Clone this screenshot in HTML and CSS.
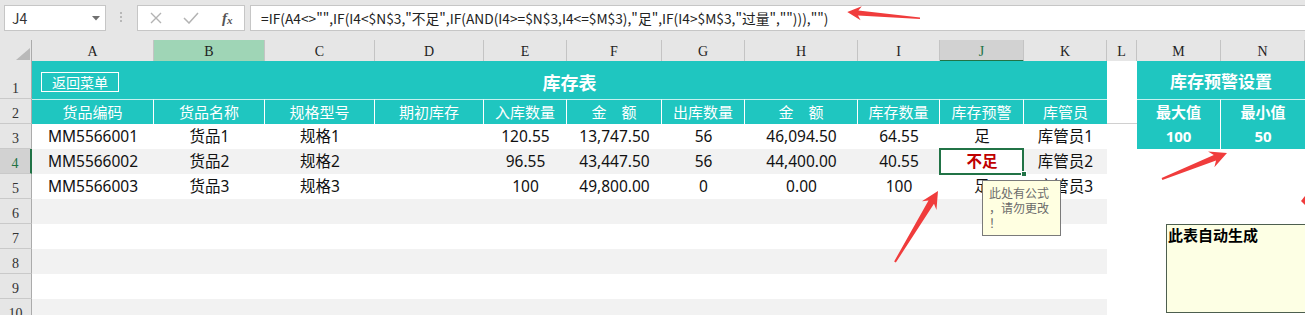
FILE: index.html
```html
<!DOCTYPE html>
<html lang="zh-CN">
<head>
<meta charset="utf-8">
<title>库存表</title>
<link rel="stylesheet" href="styles.css">
</head>
<body>
<div class="app">
  <div class="fbar">
    <div class="namebox">
      <span>J4</span>
      <svg class="nb-arrow" width="8" height="5" viewBox="0 0 8 5"><polygon points="0,0 8,0 4,4.5" fill="#707070"/></svg>
    </div>
    <svg class="grip" width="6" height="14" viewBox="0 0 6 14">
      <circle cx="3" cy="2" r="1" fill="#a8a8a8"/>
      <circle cx="3" cy="6" r="1" fill="#a8a8a8"/>
      <circle cx="3" cy="10" r="1" fill="#a8a8a8"/>
    </svg>
    <div class="fbtns">
      <span class="slot"><svg width="12" height="12" viewBox="0 0 12 12"><path d="M1 1 L11 11 M11 1 L1 11" stroke="#b3b3b3" stroke-width="1.4" fill="none"/></svg></span>
      <span class="slot"><svg width="16" height="12" viewBox="0 0 16 12"><path d="M1 6 L6 11 L15 1" stroke="#b3b3b3" stroke-width="1.5" fill="none"/></svg></span>
      <span class="slot fx"><i>f</i><i class="fx-x">x</i></span>
    </div>
    <div class="formula">=IF(A4&lt;&gt;"",IF(I4&lt;$N$3,"不足",IF(AND(I4&gt;=$N$3,I4&lt;=$M$3),"足",IF(I4&gt;$M$3,"过量",""))),"")</div>
  </div>

  <div class="sheet">
    <div class="row colhead">
      <div class="corner"><svg width="14" height="12" viewBox="0 0 14 12"><polygon points="14,0 14,12 0,12" fill="#b9b9b9"/></svg></div>
      <div class="ch">A</div>
      <div class="ch ch-b">B</div>
      <div class="ch">C</div>
      <div class="ch">D</div>
      <div class="ch">E</div>
      <div class="ch">F</div>
      <div class="ch">G</div>
      <div class="ch">H</div>
      <div class="ch">I</div>
      <div class="ch ch-sel">J</div>
      <div class="ch">K</div>
      <div class="ch">L</div>
      <div class="ch">M</div>
      <div class="ch">N</div>
    </div>

    <div class="row r1">
      <div class="rh">1</div>
      <div class="title-cell">
        <div class="menu-btn">返回菜单</div>
        <div class="title">库存表</div>
        <div></div>
      </div>
      <div class="blank"></div>
      <div class="warn-title">库存预警设置</div>
    </div>

    <div class="row r2">
      <div class="rh">2</div>
      <div class="hd">货品编码</div>
      <div class="hd">货品名称</div>
      <div class="hd">规格型号</div>
      <div class="hd">期初库存</div>
      <div class="hd">入库数量</div>
      <div class="hd">金　额</div>
      <div class="hd">出库数量</div>
      <div class="hd">金　额</div>
      <div class="hd">库存数量</div>
      <div class="hd">库存预警</div>
      <div class="hd hd-last">库管员</div>
      <div class="blank blank-line"></div>
      <div class="wh wh-m">最大值</div>
      <div class="wh">最小值</div>
    </div>

    <div class="row odd">
      <div class="rh">3</div>
      <div class="c">MM5566001</div>
      <div class="c">货品1</div>
      <div class="c">规格1</div>
      <div class="c"></div>
      <div class="c">120.55</div>
      <div class="c">13,747.50</div>
      <div class="c">56</div>
      <div class="c">46,094.50</div>
      <div class="c">64.55</div>
      <div class="c">足</div>
      <div class="c">库管员1</div>
      <div class="blank"></div>
      <div class="wv wv-m">100</div>
      <div class="wv">50</div>
    </div>

    <div class="row even">
      <div class="rh rh-sel">4</div>
      <div class="c">MM5566002</div>
      <div class="c">货品2</div>
      <div class="c">规格2</div>
      <div class="c"></div>
      <div class="c">96.55</div>
      <div class="c">43,447.50</div>
      <div class="c">56</div>
      <div class="c">44,400.00</div>
      <div class="c">40.55</div>
      <div class="c sel">不足<span class="sel-box"></span><span class="handle"></span></div>
      <div class="c">库管员2</div>
    </div>

    <div class="row odd">
      <div class="rh">5</div>
      <div class="c">MM5566003</div>
      <div class="c">货品3</div>
      <div class="c">规格3</div>
      <div class="c"></div>
      <div class="c">100</div>
      <div class="c">49,800.00</div>
      <div class="c">0</div>
      <div class="c">0.00</div>
      <div class="c">100</div>
      <div class="c">足</div>
      <div class="c">库管员3</div>
    </div>

    <div class="row even"><div class="rh">6</div><div class="fill"></div></div>
    <div class="row odd"><div class="rh">7</div><div class="fill"></div></div>
    <div class="row even"><div class="rh">8</div><div class="fill"></div></div>
    <div class="row odd"><div class="rh">9</div><div class="fill"></div></div>
    <div class="row even"><div class="rh">10</div><div class="fill"></div></div>
  </div>

  <div class="tip">此处有公式<br>，请勿更改<br>！</div>

  <div class="note">此表自动生成</div>

  <svg class="arrows" width="1305" height="315" viewBox="0 0 1305 315">
    <g fill="#f03c3c">
      <polygon transform="translate(920 18.3) rotate(184.9)" points="0,-0.7 62,-2.4 59,-7 73,0 59,7 62,2.4 0,0.7"/>
      <polygon transform="translate(895 262) rotate(-58.8)" points="0,-1 70,-3.2 66,-8.5 83,0 66,8.5 70,3.2 0,1"/>
      <polygon transform="translate(1162 179) rotate(-21.8)" points="0,-1 57,-3 53,-8.5 70,0 53,8.5 57,3 0,1"/>
      <polygon points="1301,201 1305,196 1305,205"/>
    </g>
  </svg>
</div>
</body>
</html>
```

FILE: styles.css
```css
* {
  box-sizing: border-box;
}

html,
body {
  margin: 0;
  padding: 0;
}

body {
  width: 1305px;
  height: 315px;
  overflow: hidden;
  background: #ffffff;
  font-family: "Noto Sans CJK SC", "Noto Sans", sans-serif;
}

.app {
  position: relative;
  width: 1305px;
  height: 315px;
  overflow: hidden;
}

/* ---------- formula bar ---------- */
.fbar {
  height: 40px;
  background: #e6e6e6;
  display: flex;
  align-items: flex-start;
  padding: 5px 0 0 4px;
}

.namebox {
  width: 102px;
  height: 26px;
  background: #ffffff;
  border: 1px solid #c6c6c6;
  display: flex;
  align-items: center;
  justify-content: space-between;
  padding: 0 5px 0 7px;
  font-size: 14px;
  line-height: 24px;
  color: #333333;
}

.nb-arrow {
  display: block;
}

.grip {
  display: block;
  margin: 6px 0 0 12px;
}

.fbtns {
  margin-left: 13px;
  width: 108px;
  height: 26px;
  background: #ffffff;
  border: 1px solid #c6c6c6;
  display: flex;
}

.slot {
  width: 36px;
  height: 24px;
  display: flex;
  align-items: center;
  justify-content: center;
}

.slot svg {
  display: block;
}

.fx {
  font-family: "Liberation Serif", "DejaVu Serif", serif;
  font-size: 15px;
  color: #555555;
  font-weight: bold;
  padding-left: 2px;
}

.fx-x {
  font-size: 11px;
  margin-top: 4px;
}

.formula {
  flex: 1;
  margin-left: 5px;
  margin-right: -10px;
  height: 26px;
  background: #ffffff;
  border: 1px solid #c6c6c6;
  padding-left: 10px;
  font-size: 13.75px;
  line-height: 24px;
  color: #222222;
  white-space: nowrap;
}

/* ---------- sheet ---------- */
.row {
  display: grid;
  grid-template-columns: 32px 122px 111px 110px 109px 83px 95px 83px 113px 82px 84px 83px 30px 84px 84px;
  height: 25px;
}

.colhead {
  height: 21px;
}

.corner {
  background: #e6e6e6;
  border-right: 1px solid #ababab;
  border-bottom: 1px solid #ababab;
  display: flex;
  align-items: flex-end;
  justify-content: flex-end;
  padding: 0 1px 1px 0;
}

.corner svg {
  display: block;
}

.ch {
  background: #e6e6e6;
  border-right: 1px solid #c4c4c4;
  border-bottom: 1px solid #ababab;
  font-family: "Liberation Serif", "DejaVu Serif", serif;
  font-size: 14px;
  line-height: 16px;
  color: #222222;
  text-align: center;
  padding-top: 4px;
}

.ch-b {
  background: #9fd5b6;
}

.ch-sel {
  background: #d2d2d2;
  border-bottom: 2px solid #217346;
  color: #217346;
}

.rh {
  background: #e6e6e6;
  border-right: 1px solid #ababab;
  border-bottom: 1px solid #c9c9c9;
  font-family: "Liberation Serif", "DejaVu Serif", serif;
  font-size: 14px;
  line-height: 16px;
  color: #333333;
  display: flex;
  align-items: flex-end;
  justify-content: center;
  padding-bottom: 1px;
}

.rh-sel {
  background: #d2d2d2;
  border-right: 2px solid #217346;
  color: #217346;
}

.r1 {
  height: 38px;
}

.title-cell {
  grid-column: span 11;
  background: #1fc6c0;
  display: grid;
  grid-template-columns: 1fr auto 1fr;
  align-items: center;
}

.menu-btn {
  justify-self: start;
  margin: 4px 0 0 9px;
  width: 78px;
  height: 20px;
  border: 1px solid #ffffff;
  color: #ffffff;
  font-size: 14px;
  line-height: 18px;
  text-align: center;
}

.title {
  margin-top: 4px;
  color: #ffffff;
  font-size: 18px;
  font-weight: bold;
  line-height: 24px;
}

.blank {
  background: #ffffff;
}

.blank-line {
  border-bottom: 1px solid #d0d0d0;
}

.warn-title {
  grid-column: span 2;
  background: #1fc6c0;
  color: #ffffff;
  font-size: 17px;
  font-weight: bold;
  display: flex;
  align-items: center;
  justify-content: center;
}

.hd {
  background: #1fc6c0;
  color: #ffffff;
  font-size: 15px;
  line-height: 23px;
  text-align: center;
  border-top: 1px solid rgba(255, 255, 255, 0.75);
  border-right: 1px solid #ffffff;
  white-space: nowrap;
}

.hd-last {
  border-right: none;
}

.wh,
.wv {
  background: #1fc6c0;
  color: #ffffff;
  font-size: 15px;
  font-weight: bold;
  line-height: 24px;
  text-align: center;
}

.wv {
  font-family: "Noto Sans", "Noto Sans CJK SC", sans-serif;
}

.wh {
  border-top: 1px solid rgba(255, 255, 255, 0.75);
}

.wh-m,
.wv-m {
  border-right: 1px solid #ffffff;
}

.c {
  font-family: "Noto Sans", "Noto Sans CJK SC", sans-serif;
  font-size: 15.5px;
  line-height: 25px;
  color: #111111;
  text-align: center;
  white-space: nowrap;
}

.fill {
  grid-column: span 11;
}

.odd > .c,
.odd > .fill {
  background: #ffffff;
}

.even > .c,
.even > .fill {
  background: #f2f2f2;
}

.sel {
  position: relative;
  color: #c00000;
  font-weight: bold;
}

.even > .sel {
  background: #ffffff;
}

.sel-box {
  position: absolute;
  top: -1px;
  bottom: -1px;
  left: -1px;
  right: 0;
  border: 2px solid #217346;
}

.handle {
  position: absolute;
  right: -3px;
  bottom: -3px;
  width: 6px;
  height: 6px;
  background: #217346;
  border: 1px solid #ffffff;
}

/* ---------- overlays ---------- */
.tip {
  position: absolute;
  left: 982px;
  top: 180px;
  width: 79px;
  height: 56px;
  background: #ffffe1;
  border: 1px solid #7a7a7a;
  padding: 4px 0 0 6px;
  font-size: 12px;
  line-height: 15px;
  color: #6b6b6b;
}

.note {
  position: absolute;
  left: 1166px;
  top: 224px;
  width: 150px;
  height: 89px;
  background: #fdffe4;
  border: 1px solid #4d5f4f;
  padding: 0 0 0 1px;
  font-size: 15px;
  font-weight: bold;
  line-height: 20px;
  color: #000000;
}

.arrows {
  position: absolute;
  left: 0;
  top: 0;
  pointer-events: none;
}
```
